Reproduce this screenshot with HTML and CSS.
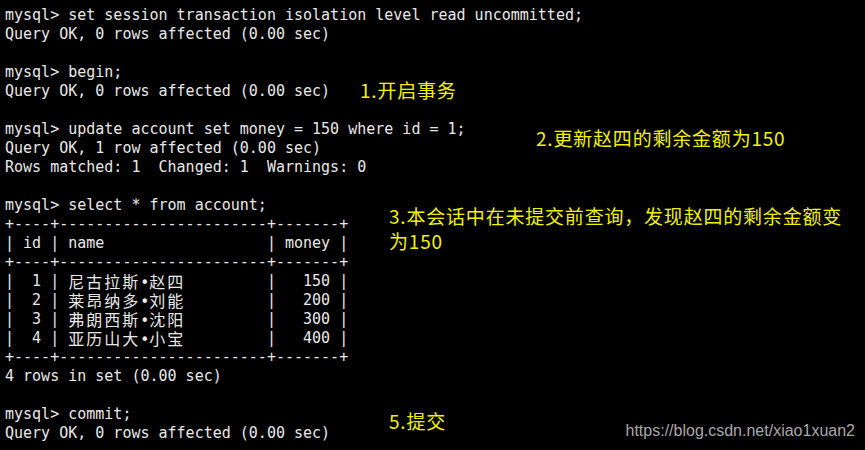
FILE: index.html
```html
<!DOCTYPE html>
<html lang="zh">
<head>
<meta charset="utf-8">
<link rel="stylesheet" href="styles.css">
</head>
<body>
<div class="screen">
<pre class="term">mysql&gt; set session transaction isolation level read uncommitted;
Query OK, 0 rows affected (0.00 sec)

mysql&gt; begin;
Query OK, 0 rows affected (0.00 sec)

mysql&gt; update account set money = 150 where id = 1;
Query OK, 1 row affected (0.00 sec)
Rows matched: 1  Changed: 1  Warnings: 0

mysql&gt; select * from account;
+----+-----------------------+-------+
| id | name                  | money |
+----+-----------------------+-------+
|  1 | <span class="name"><span class="cjk">尼古拉斯</span><span class="dot">•</span><span class="cjk">赵四</span></span>|   150 |
|  2 | <span class="name"><span class="cjk">莱昂纳多</span><span class="dot">•</span><span class="cjk">刘能</span></span>|   200 |
|  3 | <span class="name"><span class="cjk">弗朗西斯</span><span class="dot">•</span><span class="cjk">沈阳</span></span>|   300 |
|  4 | <span class="name"><span class="cjk">亚历山大</span><span class="dot">•</span><span class="cjk">小宝</span></span>|   400 |
+----+-----------------------+-------+
4 rows in set (0.00 sec)

mysql&gt; commit;
Query OK, 0 rows affected (0.00 sec)</pre>
<div class="note n1">1.开启事务</div>
<div class="note n2">2.更新赵四的剩余金额为150</div>
<div class="note n3">3.本会话中在未提交前查询，发现赵四的剩余金额变<br>为150</div>
<div class="note n5">5.提交</div>
<div class="mark">https://blog.csdn.net/xiao1xuan2</div>
</div>
</body>
</html>
```
FILE: styles.css
```css
html, body {
  margin: 0;
  padding: 0;
  background: #000;
}
.screen {
  position: relative;
  width: 865px;
  height: 450px;
  overflow: hidden;
  background: #000;
}
.term {
  margin: 0;
  padding: 6px 0 0 5px;
  font-family: "DejaVu Sans Mono", monospace;
  font-size: 15px;
  line-height: 19px;
  color: #e8e8e8;
}
.name {
  display: inline-block;
  width: 22ch;
  height: 19px;
  line-height: 19px;
  vertical-align: top;
  overflow: visible;
}
.cjk {
  font-family: "Noto Sans CJK SC", sans-serif;
  font-size: 16px;
  line-height: 19px;
  letter-spacing: 2px;
}
.dot {
  display: inline-block;
  width: 1ch;
  text-align: center;
}
.note {
  position: absolute;
  font-family: "Noto Sans CJK SC", sans-serif;
  font-size: 19px;
  line-height: 25px;
  letter-spacing: 0.8px;
  color: #f2f200;
  white-space: nowrap;
}
.n1 { left: 360px; top: 77px; }
.n2 { left: 536px; top: 125px; }
.n3 { left: 389px; top: 203px; }
.n5 { left: 389px; top: 408px; }
.mark {
  position: absolute;
  right: 10px;
  top: 421px;
  font-family: "Liberation Sans", Arial, sans-serif;
  font-size: 16px;
  line-height: 20px;
  color: #a8a8a8;
}
```
